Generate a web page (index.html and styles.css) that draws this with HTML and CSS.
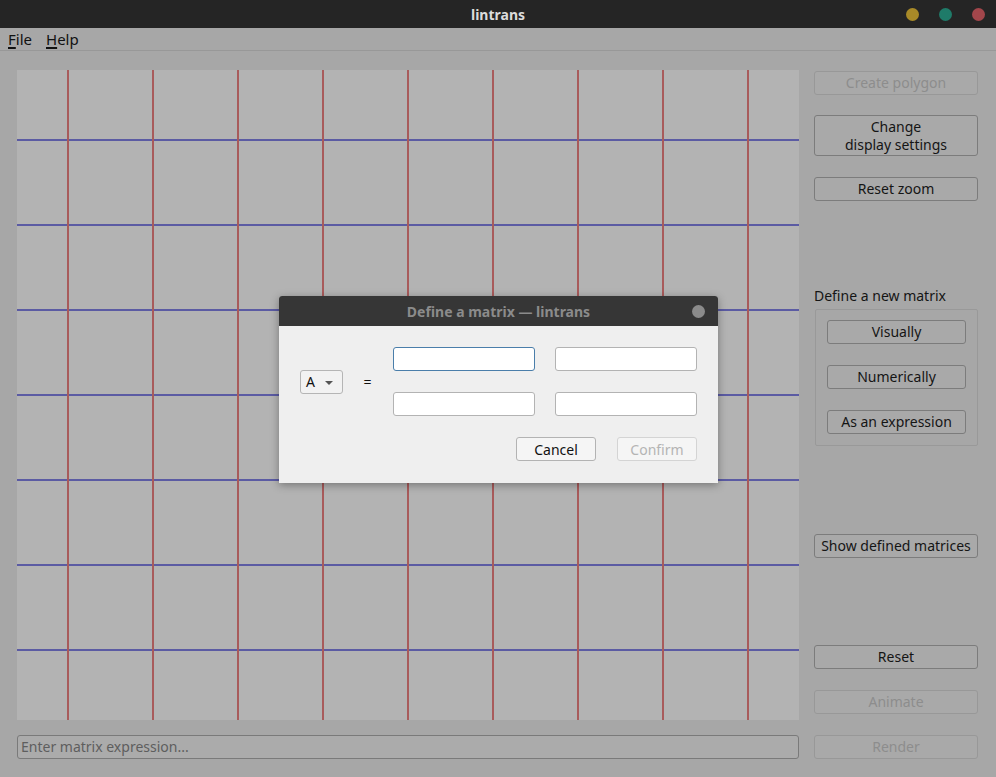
FILE: index.html
```html
<!DOCTYPE html>
<html>
<head>
<meta charset="utf-8">
<link rel="stylesheet" href="styles.css">
<title>lintrans</title>
</head>
<body>
<div class="window">
  <div class="titlebar">
    <span class="title">lintrans</span>
    <div class="controls">
      <span class="dot dot-min"></span>
      <span class="dot dot-max"></span>
      <span class="dot dot-close"></span>
    </div>
  </div>
  <div class="menubar">
    <span class="menu"><u>F</u>ile</span>
    <span class="menu"><u>H</u>elp</span>
  </div>
  <div class="main">
    <div class="left">
      <div class="canvas">
        <svg class="grid" width="782" height="650" viewBox="0 0 782 650">
          <g stroke="#5b5ba3" stroke-width="2">
            <line x1="0" y1="70" x2="782" y2="70"/>
            <line x1="0" y1="155" x2="782" y2="155"/>
            <line x1="0" y1="240" x2="782" y2="240"/>
            <line x1="0" y1="325" x2="782" y2="325"/>
            <line x1="0" y1="410" x2="782" y2="410"/>
            <line x1="0" y1="495" x2="782" y2="495"/>
            <line x1="0" y1="580" x2="782" y2="580"/>
          </g>
          <g stroke="#a85b5b" stroke-width="2">
            <line x1="51" y1="0" x2="51" y2="650"/>
            <line x1="136" y1="0" x2="136" y2="650"/>
            <line x1="221" y1="0" x2="221" y2="650"/>
            <line x1="306" y1="0" x2="306" y2="650"/>
            <line x1="391" y1="0" x2="391" y2="650"/>
            <line x1="476" y1="0" x2="476" y2="650"/>
            <line x1="561" y1="0" x2="561" y2="650"/>
            <line x1="646" y1="0" x2="646" y2="650"/>
            <line x1="731" y1="0" x2="731" y2="650"/>
          </g>
        </svg>
      </div>
      <div class="expr">Enter matrix expression...</div>
    </div>
    <div class="right">
      <button class="btn disabled first">Create polygon</button>
      <button class="btn tall"><span class="line">Change</span><span class="line">display settings</span></button>
      <button class="btn">Reset zoom</button>
      <div class="group-label">Define a new matrix</div>
      <div class="group">
        <button class="btn">Visually</button>
        <button class="btn">Numerically</button>
        <button class="btn">As an expression</button>
      </div>
      <button class="btn show">Show defined matrices</button>
      <div class="spacer"></div>
      <button class="btn">Reset</button>
      <button class="btn disabled">Animate</button>
      <button class="btn disabled last">Render</button>
    </div>
  </div>

  <div class="dialog">
    <div class="dlg-title">
      <span>Define a matrix — lintrans</span>
      <span class="dlg-dot"></span>
    </div>
    <div class="dlg-body">
      <div class="dlg-row">
        <div class="combo">A<span class="caret"></span></div>
        <span class="eq">=</span>
        <div class="matrix">
          <div class="field focus"></div>
          <div class="field"></div>
          <div class="field"></div>
          <div class="field"></div>
        </div>
      </div>
      <div class="dlg-buttons">
        <button class="dbtn">Cancel</button>
        <button class="dbtn dim">Confirm</button>
      </div>
    </div>
  </div>
</div>
</body>
</html>
```
FILE: styles.css
```css
* { box-sizing: border-box; }
html, body {
  margin: 0;
  padding: 0;
  width: 996px;
  height: 777px;
  overflow: hidden;
  background: #a7a7a7;
  font-family: "Noto Sans", "Open Sans", sans-serif;
  font-size: 14px;
  color: #1a1a1a;
}
.window {
  position: relative;
  width: 996px;
  height: 777px;
  display: flex;
  flex-direction: column;
}
.titlebar {
  height: 28px;
  background: #252525;
  display: flex;
  align-items: center;
  justify-content: center;
  position: relative;
}
.title {
  color: #dcdcdc;
  font-weight: bold;
  font-size: 14px;
}
.controls {
  position: absolute;
  right: 11px;
  top: 8px;
  display: flex;
  gap: 20px;
}
.dot {
  width: 13px;
  height: 13px;
  border-radius: 50%;
  display: block;
}
.dot-min { background: #a88a28; }
.dot-max { background: #1f7b69; }
.dot-close { background: #a3464b; }

.menubar {
  height: 23px;
  display: flex;
  align-items: center;
  padding-left: 8px;
  gap: 14px;
  border-bottom: 1px solid #989898;
  font-size: 15px;
  color: #111;
}
.menu u { text-decoration-thickness: 2px; text-underline-offset: 2px; }

.main {
  flex: 1;
  display: flex;
  padding: 19px 18px 18px 17px;
  gap: 15px;
}
.left {
  width: 782px;
  display: flex;
  flex-direction: column;
  gap: 15px;
}
.canvas {
  width: 782px;
  height: 650px;
  background: #b3b3b3;
}
.grid { display: block; }
.expr {
  height: 24px;
  border: 1px solid #7a7a7a;
  border-radius: 3px;
  background: #ababab;
  color: #5e5e5e;
  font-size: 14px;
  line-height: 22px;
  padding-left: 3px;
}

.right {
  width: 164px;
  display: flex;
  flex-direction: column;
}
.btn {
  font-family: inherit;
  font-size: 14px;
  color: #151515;
  background: #a9a9a9;
  border: 1px solid #7c7c7c;
  border-radius: 3px;
  height: 24px;
  padding: 0;
  line-height: 20px;
  margin: 0 0 21px 0;
  width: 100%;
  flex: none;
}
.btn.first { margin-top: 1px; margin-bottom: 20px; }
.btn.tall {
  height: 41px;
  display: flex;
  flex-direction: column;
  align-items: center;
  justify-content: center;
}
.btn.tall .line { display: block; line-height: 18px; }
.btn.disabled {
  color: #8d8d8d;
  border-color: #989898;
}
.btn.last { margin-bottom: 0; }
.group-label {
  margin-top: 65px;
  font-size: 14px;
  color: #151515;
  line-height: 18px;
  margin-bottom: 4px;
}
.group {
  border: 1px solid #999;
  border-radius: 2px;
  padding: 10px 11px 0 11px;
  margin-left: 1px;
  display: flex;
  flex-direction: column;
}
.group .btn { margin-bottom: 21px; }
.group .btn:last-child { margin-bottom: 11px; }
.btn.show { margin-top: 88px; }
.spacer { flex: 1; }

.dialog {
  position: absolute;
  left: 279px;
  top: 296px;
  width: 439px;
  height: 187px;
  background: #efefef;
  box-shadow: 0 2px 8px rgba(0,0,0,0.35);
  border-radius: 3px 3px 0 0;
  display: flex;
  flex-direction: column;
}
.dlg-title {
  height: 30px;
  background: #363636;
  border-radius: 3px 3px 0 0;
  color: #8b8b8b;
  font-weight: bold;
  font-size: 14px;
  display: flex;
  align-items: center;
  justify-content: center;
  position: relative;
}
.dlg-dot {
  position: absolute;
  right: 13px;
  top: 9px;
  width: 13px;
  height: 13px;
  border-radius: 50%;
  background: #8b8b8b;
}
.dlg-body {
  padding: 21px 21px 0 21px;
  display: flex;
  flex-direction: column;
}
.dlg-row {
  display: flex;
  align-items: center;
}
.combo {
  width: 44px;
  height: 24px;
  border: 1px solid #b5b5b5;
  border-radius: 3px;
  background: #f2f2f2;
  font-size: 14px;
  line-height: 22px;
  padding-left: 5px;
  position: relative;
  color: #111;
}
.caret {
  position: absolute;
  right: 9px;
  top: 10px;
  width: 0;
  height: 0;
  border-left: 4px solid transparent;
  border-right: 4px solid transparent;
  border-top: 4px solid #555;
}
.eq {
  margin-left: 20px;
  width: 30px;
  font-size: 14px;
  color: #111;
}
.matrix {
  display: grid;
  grid-template-columns: 142px 142px;
  column-gap: 20px;
  row-gap: 21px;
}
.field {
  height: 24px;
  border: 1px solid #b3b3b3;
  border-radius: 3px;
  background: #ffffff;
}
.field.focus {
  border-color: #4a7eaa;
}
.dlg-buttons {
  display: flex;
  justify-content: flex-end;
  gap: 21px;
  margin-top: 21px;
  padding-right: 0;
}
.dbtn {
  font-family: inherit;
  font-size: 14px;
  width: 80px;
  height: 24px;
  padding: 0;
  border: 1px solid #b3b3b3;
  border-radius: 3px;
  background: #f5f5f5;
  color: #111;
}
.dbtn.dim {
  color: #b4b4b4;
  border-color: #d4d4d4;
}
```
